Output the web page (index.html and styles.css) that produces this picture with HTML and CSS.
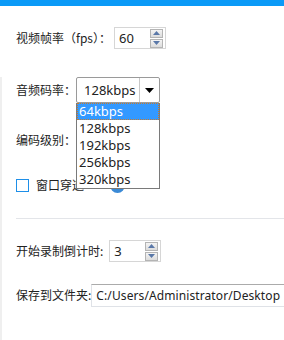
FILE: index.html
```html
<!DOCTYPE html>
<html>
<head>
<meta charset="utf-8">
<link rel="stylesheet" href="styles.css">
</head>
<body>
<div class="topbar"></div>
<div class="first">
  <div class="row row1">
    <span class="label">视频帧率（fps）：</span>
    <div class="spin spin1">
      <span class="val">60</span>
      <div class="btns">
        <div class="sb up"><svg width="7" height="4" viewBox="0 0 7 4"><path d="M0 4L3.5 0L7 4Z" fill="#5a78a8"/></svg></div>
        <div class="sb down"><svg width="7" height="4" viewBox="0 0 7 4"><path d="M0 0L3.5 4L7 0Z" fill="#5a78a8"/></svg></div>
      </div>
    </div>
  </div>
</div>
<div class="rest">
  <div class="row row2">
    <span class="label">音频码率：</span>
    <div class="selectwrap">
      <div class="select">
        <span class="selval">128kbps</span>
        <span class="arrow"><svg width="9" height="5" viewBox="0 0 9 5"><path d="M0 0L9 0L4.5 5Z" fill="#000"/></svg></span>
      </div>
      <ul class="list">
        <li class="sel">64kbps</li>
        <li>128kbps</li>
        <li>192kbps</li>
        <li>256kbps</li>
        <li>320kbps</li>
      </ul>
    </div>
  </div>
  <div class="row row3">
    <span class="label">编码级别：</span>
  </div>
  <div class="row row4">
    <span class="check"></span>
    <span class="label cl">窗口穿透</span>
    <span class="help"></span>
  </div>
  <div class="divider"></div>
  <div class="row row5">
    <span class="label">开始录制倒计时:</span>
    <div class="spin spin2">
      <span class="val">3</span>
      <div class="btns">
        <div class="sb up"><svg width="7" height="4" viewBox="0 0 7 4"><path d="M0 4L3.5 0L7 4Z" fill="#5a78a8"/></svg></div>
        <div class="sb down"><svg width="7" height="4" viewBox="0 0 7 4"><path d="M0 0L3.5 4L7 0Z" fill="#5a78a8"/></svg></div>
      </div>
    </div>
  </div>
  <div class="row row6">
    <span class="label">保存到文件夹:</span>
    <div class="path">C:/Users/Administrator/Desktop</div>
  </div>
</div>
</body>
</html>
```
FILE: styles.css
```css
html, body {
  margin: 0;
  padding: 0;
  background: #fff;
  width: 284px;
  height: 340px;
  overflow: hidden;
  font-family: "Noto Sans CJK SC", "Noto Sans", sans-serif;
  font-size: 12px;
  color: #222;
}
.topbar {
  height: 6px;
  background: #0b9af7;
}
.first {
  padding: 21px 0 0 16px;
  height: 33px;
}
.rest {
  border-left: 2px solid #efefef;
  padding-left: 14px;
  height: 280px;
}
.row {
  display: flex;
  align-items: center;
  height: 22px;
}
.label {
  white-space: nowrap;
  line-height: 16px;
}
.spin {
  width: 44px;
  height: 20px;
  border: 1px solid #d6d6d6;
  display: flex;
  align-items: center;
  justify-content: space-between;
  padding: 0 2px 0 4px;
  box-sizing: content-box;
  font-family: "Noto Sans", sans-serif;
  font-size: 13px;
}
.spin1 {
  margin-left: 3px;
}
.spin .val {
  line-height: 16px;
}
.btns {
  display: flex;
  flex-direction: column;
  gap: 1px;
  width: 13px;
}
.sb {
  height: 7px;
  border: 1px solid #b4b4b4;
  background: linear-gradient(#f4f4f4, #dcdcdc);
  display: flex;
  align-items: center;
  justify-content: center;
}
.row2 {
  height: 26px;
  margin-top: 17px;
}
.selectwrap {
  position: relative;
}
.select {
  width: 82px;
  height: 24px;
  border: 1px solid #9a9a9a;
  border-radius: 2px;
  display: flex;
  align-items: center;
  font-family: "Noto Sans", sans-serif;
  font-size: 13px;
}
.selval {
  flex: 1;
  padding-left: 7px;
  line-height: 16px;
}
.arrow {
  width: 19px;
  height: 24px;
  border-left: 1px solid #c8c8c8;
  display: flex;
  align-items: center;
  justify-content: center;
}
.list {
  position: absolute;
  left: 0;
  top: 26px;
  margin: 0;
  padding: 0;
  list-style: none;
  width: 82px;
  border: 1px solid #7a7a7a;
  border-top: none;
  background: #fff;
  font-family: "Noto Sans", sans-serif;
  font-size: 13px;
  z-index: 2;
}
.list li {
  height: 17px;
  line-height: 17px;
  padding-left: 2px;
}
.list li.sel {
  background: #3399ff;
  color: #fff;
  outline: 1px dotted #c87a2a;
  outline-offset: -1px;
}
.row3 {
  margin-top: 26px;
}
.row4 {
  margin-top: 23px;
}
.check {
  width: 11px;
  height: 11px;
  border: 1px solid #1e8fe8;
  margin-right: 7px;
}
.help {
  width: 15px;
  height: 15px;
  border-radius: 50%;
  background: #3b8ad6;
  margin-left: 26px;
  margin-top: 1px;
}
.divider {
  height: 1px;
  background: #e3e5e9;
  margin-top: 22px;
}
.row5 {
  margin-top: 21px;
}
.spin2 {
  margin-left: 6px;
}
.row6 {
  margin-top: 22px;
}
.path {
  height: 21px;
  border-top: 1px solid #ababab;
  border-left: 1px solid #dfe2e7;
  border-bottom: 1px solid #dfe2e7;
  padding-left: 4px;
  line-height: 21px;
  font-family: "Noto Sans", sans-serif;
  font-size: 12px;
  letter-spacing: 0.1px;
  white-space: nowrap;
  flex: 1;
  overflow: hidden;
}
```
